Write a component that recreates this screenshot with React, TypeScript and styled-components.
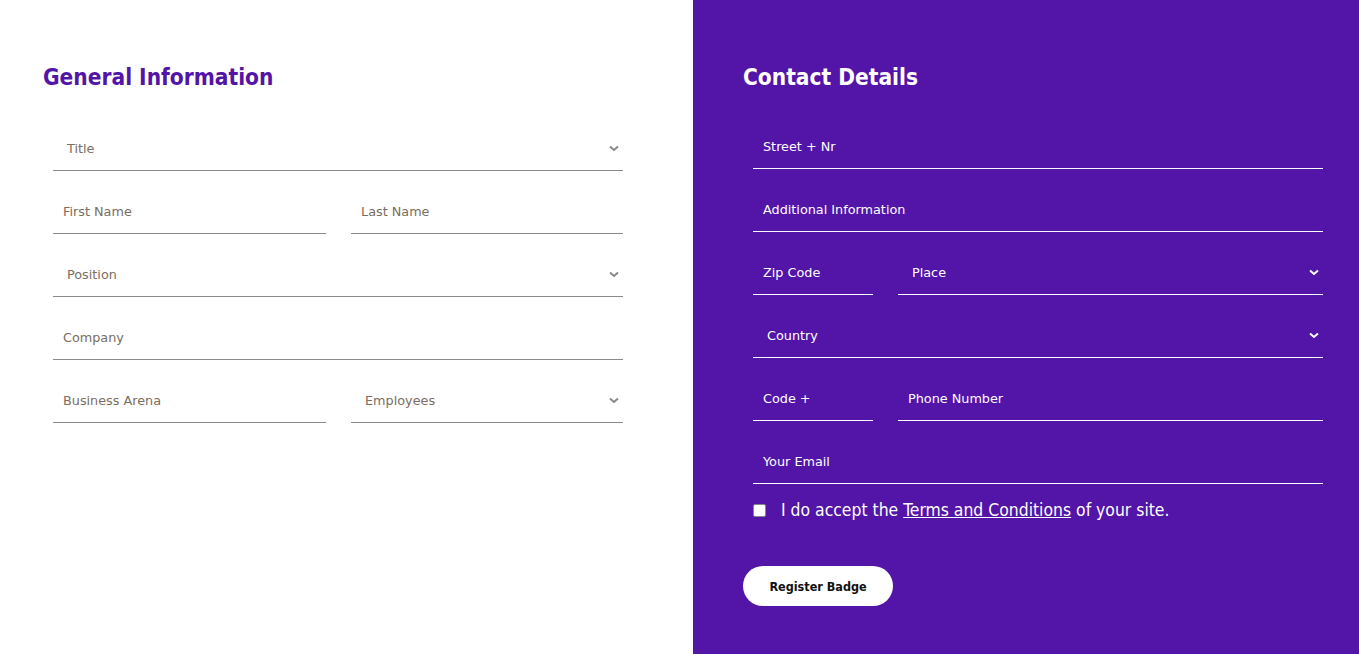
import React from "react";
import styled, { createGlobalStyle } from "styled-components";

const Global = createGlobalStyle`
  html, body { margin: 0; padding: 0; }
  body { font-family: "DejaVu Sans", Verdana, sans-serif; }
  * { box-sizing: border-box; }
`;

const Page = styled.div`
  display: grid;
  grid-template-columns: 693px 1fr;
  height: 654px;
`;

const Panel = styled.section<{ $dark?: boolean }>`
  background: ${(p) => (p.$dark ? "#5314a8" : "#ffffff")};
  padding: 61px 0 0 ${(p) => (p.$dark ? "50px" : "43px")};
`;

const Heading = styled.h2<{ $dark?: boolean }>`
  margin: 0;
  font-family: "DejaVu Sans Condensed", "DejaVu Sans", sans-serif;
  font-size: 22.5px;
  line-height: 33px;
  font-weight: 700;
  color: ${(p) => (p.$dark ? "#ffffff" : "#5314a8")};
`;

const Form = styled.div<{ $dark?: boolean }>`
  margin: ${(p) => (p.$dark ? "30px" : "32px")} 0 0 10px;
  width: 570px;
  display: flex;
  flex-direction: column;
  gap: 18px;
`;

const Row = styled.div<{ $cols: string }>`
  display: grid;
  grid-template-columns: ${(p) => p.$cols};
  column-gap: 25px;
`;

const Field = styled.div<{ $dark?: boolean; $select?: boolean }>`
  height: 45px;
  display: flex;
  align-items: center;
  justify-content: space-between;
  padding: 0 ${(p) => (p.$select ? "4px" : "10px")} 0 ${(p) => (p.$select ? "14px" : "10px")};
  border-bottom: 1px solid ${(p) => (p.$dark ? "#ffffff" : "#8a8a8a")};
  font-family: "DejaVu Sans", sans-serif;
  font-size: 12.8px;
  color: ${(p) => (p.$dark ? "#ffffff" : "#7a6d62")};
`;

const Chevron = styled.svg<{ $dark?: boolean }>`
  width: 10px;
  height: 7px;
  stroke: ${(p) => (p.$dark ? "#ffffff" : "#888888")};
  stroke-width: 2;
  fill: none;
`;

const Accept = styled.label`
  display: flex;
  align-items: center;
  gap: 15px;
  margin: 16px 0 0 10px;
  font-family: "DejaVu Sans Condensed", "DejaVu Sans", sans-serif;
  font-size: 17.4px;
  color: #ffffff;
  a { color: #ffffff; text-decoration: underline; }
`;

const Box = styled.span`
  width: 13px;
  height: 13px;
  background: #ffffff;
  border: 1px solid #888;
  border-radius: 2px;
  flex: none;
`;

const Button = styled.button`
  margin-top: 46px;
  width: 150px;
  height: 40px;
  border: none;
  border-radius: 20px;
  background: #ffffff;
  color: #111;
  font-family: "DejaVu Sans Condensed", "DejaVu Sans", sans-serif;
  font-weight: 700;
  font-size: 12.5px;
`;

const Down = ({ dark }: { dark?: boolean }) => (
  <Chevron $dark={dark} viewBox="0 0 10 7">
    <polyline points="1,1.5 5,5 9,1.5" />
  </Chevron>
);

const Input = ({ label, dark }: { label: string; dark?: boolean }) => (
  <Field $dark={dark}>{label}</Field>
);

const Select = ({ label, dark }: { label: string; dark?: boolean }) => (
  <Field $dark={dark} $select>
    <span>{label}</span>
    <Down dark={dark} />
  </Field>
);

export default function App() {
  return (
    <>
      <Global />
      <Page>
        <Panel>
          <Heading>General Information</Heading>
          <Form>
            <Select label="Title" />
            <Row $cols="273px 1fr">
              <Input label="First Name" />
              <Input label="Last Name" />
            </Row>
            <Select label="Position" />
            <Input label="Company" />
            <Row $cols="273px 1fr">
              <Input label="Business Arena" />
              <Select label="Employees" />
            </Row>
          </Form>
        </Panel>
        <Panel $dark>
          <Heading $dark>Contact Details</Heading>
          <Form $dark>
            <Input dark label="Street + Nr" />
            <Input dark label="Additional Information" />
            <Row $cols="120px 1fr">
              <Input dark label="Zip Code" />
              <Select dark label="Place" />
            </Row>
            <Select dark label="Country" />
            <Row $cols="120px 1fr">
              <Input dark label="Code +" />
              <Input dark label="Phone Number" />
            </Row>
            <Input dark label="Your Email" />
          </Form>
          <Accept>
            <Box />
            <span>
              I do accept the <a href="#">Terms and Conditions</a> of your site.
            </span>
          </Accept>
          <Button>Register Badge</Button>
        </Panel>
      </Page>
    </>
  );
}
